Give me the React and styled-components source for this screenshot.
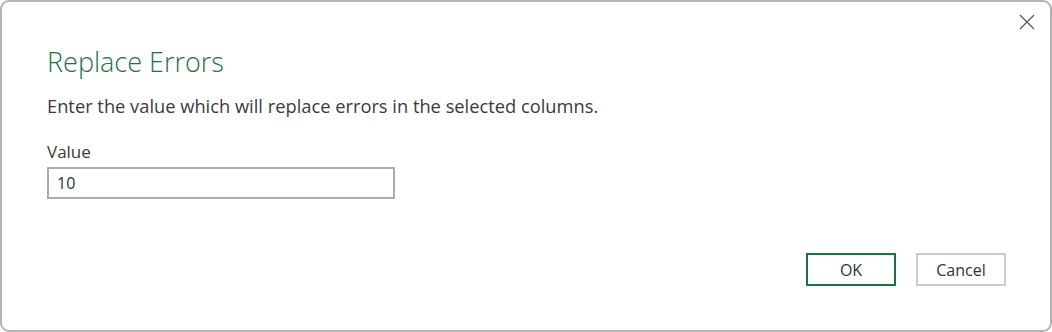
import styled, { createGlobalStyle } from "styled-components";

const Global = createGlobalStyle`
  html, body {
    margin: 0;
    padding: 0;
    background: #ffffff;
  }
  * {
    box-sizing: border-box;
  }
`;

const Dialog = styled.div`
  width: 1052px;
  height: 332px;
  border: 2px solid #b3b3b3;
  border-radius: 9px;
  background: #ffffff;
  display: flex;
  flex-direction: column;
  padding: 0 44px 0 45px;
  font-family: "Open Sans", "Liberation Sans", sans-serif;
  color: #3b3b3b;
`;

const TopBar = styled.div`
  height: 42px;
  display: flex;
  justify-content: flex-end;
  margin-right: -44px;
`;

const CloseButton = styled.button`
  width: 46px;
  height: 40px;
  border: none;
  background: transparent;
  display: flex;
  align-items: center;
  justify-content: center;
  padding: 0;
  cursor: pointer;
`;

const Title = styled.h1`
  margin: 0;
  font-size: 27px;
  font-weight: 300;
  color: #217346;
  line-height: 36px;
`;

const Description = styled.p`
  margin: 14px 0 0;
  font-size: 18.3px;
  line-height: 24px;
`;

const Label = styled.label`
  display: block;
  margin-top: 23px;
  font-size: 17px;
  line-height: 22px;
`;

const Input = styled.input`
  margin-top: 4px;
  width: 348px;
  height: 32px;
  border: 2px solid #ababab;
  padding: 0 8px;
  font-family: "Open Sans", "Liberation Sans", sans-serif;
  font-size: 16px;
  color: #333;
  outline: none;
`;

const Footer = styled.div`
  margin-top: auto;
  margin-bottom: 44px;
  display: flex;
  justify-content: flex-end;
  gap: 20px;
`;

const Button = styled.button`
  width: 90px;
  height: 33px;
  background: #ffffff;
  border: 2px solid ${(p) => (p.primary ? "#1f7145" : "#cbcbcb")};
  font-family: "Open Sans", "Liberation Sans", sans-serif;
  font-size: 16px;
  color: #333;
  cursor: pointer;
`;

const App = () => {
  return (
    <>
      <Global />
      <Dialog>
        <TopBar>
          <CloseButton aria-label="Close">
            <svg width="16" height="16" viewBox="0 0 16 16">
              <path d="M1 1L15 15M15 1L1 15" stroke="#555" strokeWidth="1.2" />
            </svg>
          </CloseButton>
        </TopBar>
        <Title>Replace Errors</Title>
        <Description>
          Enter the value which will replace errors in the selected columns.
        </Description>
        <Label>Value</Label>
        <Input defaultValue="10" />
        <Footer>
          <Button primary>OK</Button>
          <Button>Cancel</Button>
        </Footer>
      </Dialog>
    </>
  );
};

export default App;
